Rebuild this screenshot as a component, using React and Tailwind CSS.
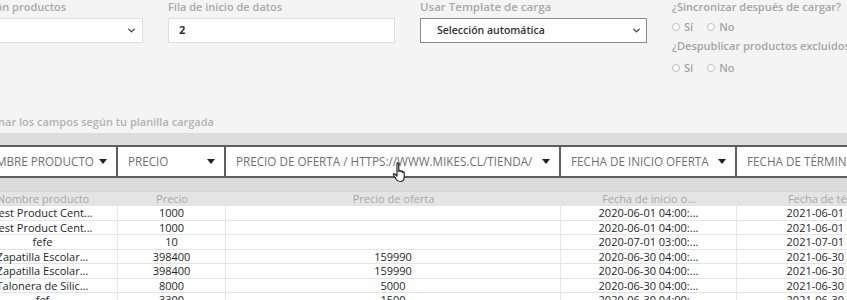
import React from 'react';
import { ChevronDown } from 'lucide-react';

const mapping = [
  { label: 'Nombre producto', w: 'w-[150px]' },
  { label: 'Precio', w: 'w-[108px]' },
  { label: 'Precio de oferta / https://www.mikes.cl/tienda/', w: 'w-[335px]' },
  { label: 'Fecha de inicio oferta', w: 'w-[176px]' },
  { label: 'Fecha de término oferta', w: 'w-[200px]' },
];

const colWidths = ['w-[150px]', 'w-[108px]', 'w-[335px]', 'w-[176px]', 'w-[200px]'];

const headers = ['Nombre producto', 'Precio', 'Precio de oferta', 'Fecha de inicio o...', 'Fecha de término...'];

const rows = [
  ['Test Product Cent...', '1000', '', '2020-06-01 04:00:...', '2021-06-01 04:00:...'],
  ['Test Product Cent...', '1000', '', '2020-06-01 04:00:...', '2021-06-01 04:00:...'],
  ['fefe', '10', '', '2020-07-01 03:00:...', '2021-07-01 03:00:...'],
  ['Zapatilla Escolar...', '398400', '159990', '2020-06-30 04:00:...', '2021-06-30 04:00:...'],
  ['Zapatilla Escolar...', '398400', '159990', '2020-06-30 04:00:...', '2021-06-30 04:00:...'],
  ['Talonera de Silic...', '8000', '5000', '2020-06-30 04:00:...', '2021-06-30 04:00:...'],
  ['fef', '3300', '1500', '2020-06-30 04:00:...', '2021-06-30 04:00:...'],
];

const Radio = ({ label }) => (
  <span className="flex items-center gap-[4px]">
    <span className="w-[8px] h-[8px] rounded-full border border-[#bdbdbd] bg-white" />
    <span>{label}</span>
  </span>
);

const Caret = () => (
  <span className="w-0 h-0 border-l-[4px] border-r-[4px] border-t-[5px] border-l-transparent border-r-transparent border-t-[#222] shrink-0" />
);

const App = () => {
  return (
    <div className="relative w-[847px] h-[300px] overflow-hidden bg-[#f4f4f4] font-['Open_Sans',sans-serif]">
      {/* form row */}
      <div className="-ml-[84px] grid grid-cols-[227px_227px_227px_260px] gap-x-[25px] text-[11px] font-semibold text-[#a9a9a9]">
        <div>
          <div className="leading-[14px] whitespace-nowrap">Columna relación productos</div>
          <div className="mt-[4px] h-[25px] bg-white border border-[#dedede] flex items-center justify-end pr-[5px] text-[#444]">
            <ChevronDown size={11} strokeWidth={3} />
          </div>
        </div>
        <div>
          <div className="leading-[14px]">Fila de inicio de datos</div>
          <div className="mt-[4px] h-[25px] bg-white border border-[#dedede] flex items-center px-[10px] text-[#333] font-bold">2</div>
        </div>
        <div>
          <div className="leading-[14px] text-[11.5px]">Usar Template de carga</div>
          <div className="mt-[4px] h-[25px] bg-white border border-[#8a8a8a] flex items-center justify-between pl-[16px] pr-[4px] text-[#333] text-[10.5px] font-semibold">
            <span>Selección automática</span>
            <ChevronDown size={11} strokeWidth={3} className="text-[#444]" />
          </div>
        </div>
        <div className="text-[#a5a5a5] whitespace-nowrap">
          <div className="leading-[14px]">¿Sincronizar después de cargar?</div>
          <div className="mt-[6px] flex gap-[14px] leading-[14px]">
            <Radio label="Sí" />
            <Radio label="No" />
          </div>
          <div className="mt-[5px] leading-[14px]">¿Despublicar productos excluidos?</div>
          <div className="mt-[8px] flex gap-[14px] leading-[14px]">
            <Radio label="Sí" />
            <Radio label="No" />
          </div>
        </div>
      </div>

      <div className="-ml-[40px] mt-[40px] text-[11px] font-semibold text-[#b2b2b2] leading-[14px]">
        Relacionar los campos según tu planilla cargada
      </div>

      {/* mapping band */}
      <div className="mt-[4px] -ml-[32px] w-max bg-[#dcdcdc] pt-[12px]">
        <div className="flex border-y-2 border-[#5e5e5e] bg-white">
          {mapping.map((m, i) => (
            <div
              key={i}
              className={`${m.w} h-[29px] shrink-0 flex items-center justify-between pl-[10px] pr-[9px] border-r-2 border-[#5e5e5e] text-[11.7px] uppercase text-[#6f6f6f] whitespace-nowrap overflow-hidden`}
            >
              <span>{m.label}</span>
              {i < 4 && <Caret />}
            </div>
          ))}
        </div>
        <div className="h-[13px]" />

        {/* data table */}
        <div className="text-[11px] leading-[14px]">
          <div className="flex h-[15px] bg-[#e4e4e4] border-t border-[#d4d4d4] text-[#a8a8a8]">
            {headers.map((h, i) => (
              <div key={i} className={`${colWidths[i]} shrink-0 text-center whitespace-nowrap`}>{h}</div>
            ))}
          </div>
          {rows.map((r, ri) => (
            <div key={ri} className="flex h-[14.5px] bg-white border-b border-[#e4e4e4] text-[#262626] font-medium">
              {r.map((c, ci) => (
                <div
                  key={ci}
                  className={`${colWidths[ci]} shrink-0 text-center whitespace-nowrap border-r border-[#e6e6e6]`}
                >
                  {c}
                </div>
              ))}
            </div>
          ))}
        </div>
      </div>

      {/* mouse cursor */}
      <svg className="absolute left-[392px] top-[161px]" width="18" height="24" viewBox="0 0 18 24">
        <path
          d="M5 2.5c0-1 1.8-1 1.8 0v8l0.6-0.2c0-1 1.6-1 1.6 0v0.5c0-1 1.6-1 1.6 0v0.7c0-1 1.6-1 1.6 0v4.5c0 2.5-1.5 4.5-4 4.5H8c-2 0-3-1-4-2.5L1.5 14c-0.6-1 0.6-1.8 1.4-1L5 15z"
          fill="#fff"
          stroke="#222"
          strokeWidth="1.2"
          strokeLinejoin="round"
        />
      </svg>
    </div>
  );
};

export default App;
